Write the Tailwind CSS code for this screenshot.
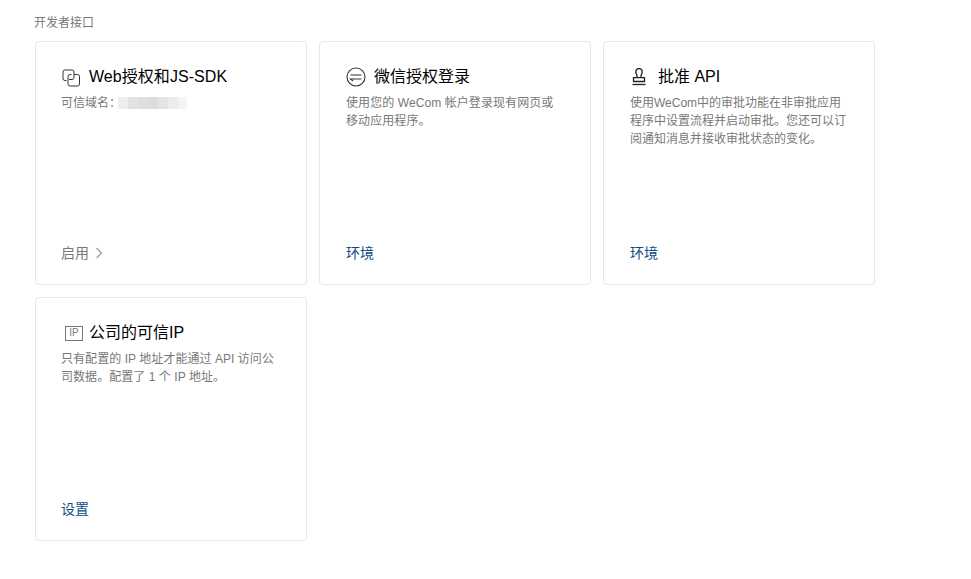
<!DOCTYPE html>
<html lang="zh-CN">
<head>
    <meta charset="UTF-8">
    <meta name="viewport" content="width=device-width, initial-scale=1.0">
    <title>开发者接口</title>
    <script src="https://cdn.jsdelivr.net/npm/@tailwindcss/browser@4"></script>
</head>
<body class="bg-white font-['Liberation_Sans','Noto_Sans_CJK_SC',sans-serif]">
<div class="pl-[35px] pt-[15px]">
    <div class="-ml-[1px] h-[16px] text-[12px] leading-[16px] text-[#787878]">开发者接口</div>
    <div class="mt-[10px] grid grid-cols-[repeat(3,272px)] auto-rows-[244px] gap-3">

        <!-- Web auth -->
        <div class="flex flex-col rounded-[4px] border border-[#e4e6e9] pt-[23px] pb-[21px] pl-[25px] pr-[25px]">
            <div class="flex h-[24px] items-center gap-[9px] text-[16px] leading-[24px] text-[#000]">
                <svg class="ml-[1px] mt-[2px] h-[18px] w-[18px] shrink-0" viewBox="0 0 18 18" fill="none" stroke="#333" stroke-width="1">
                    <path d="M4.500 11.500H3a2 2 0 0 1-2-2V3a2 2 0 0 1 2-2h7a2 2 0 0 1 2 2v5.500a2 2 0 0 1-2 2H7"/>
                    <path d="M12 5.500h3.500a2 2 0 0 1 2 2V15a2 2 0 0 1-2 2H8a2 2 0 0 1-2-2V7.500a2 2 0 0 1 2-2h1.500"/>
                </svg>
                <span class="tracking-[0.05px]">Web授权和JS-SDK</span>
            </div>
            <div class="mt-[5px] flex h-[18px] items-center text-[12px] leading-[18px] text-[#787878]">
                <span>可信域名：</span>
                <!-- blurred out domain -->
                <span class="-ml-[3px] flex h-[12px] w-[69px]">
                    <i class="h-full w-[10px] bg-[#eeeeee]"></i>
                    <i class="h-full w-[10px] bg-[#e2e2e2]"></i>
                    <i class="h-full w-[10px] bg-[#dedede]"></i>
                    <i class="h-full w-[10px] bg-[#dcdcdc]"></i>
                    <i class="h-full w-[10px] bg-[#e4e4e4]"></i>
                    <i class="h-full w-[10px] bg-[#ececec]"></i>
                    <i class="h-full w-[9px] bg-[#f4f4f4]"></i>
                </span>
            </div>
            <div class="mt-auto flex h-[20px] items-center gap-[6px] text-[14px] leading-[20px] text-[#787878]">
                <span>启用</span>
                <svg class="h-[12px] w-[8px]" viewBox="0 0 8 12" fill="none" stroke="#a8a8a8" stroke-width="1.5"><path d="M1.500 1l5 5-5 5"/></svg>
            </div>
        </div>

        <!-- WeCom login -->
        <div class="flex flex-col rounded-[4px] border border-[#e4e6e9] pt-[23px] pb-[21px] pl-[26px] pr-[25px]">
            <div class="flex h-[24px] items-center gap-[8px] text-[16px] leading-[24px] text-[#000]">
                <svg class="h-[20px] w-[20px] shrink-0" viewBox="0 0 20 20" fill="none" stroke="#333" stroke-width="1.100">
                    <circle cx="10" cy="10" r="9"/>
                    <path d="M4.500 8h11M15.500 12h-11l2.500 2"/>
                </svg>
                <span>微信授权登录</span>
            </div>
            <p class="mt-[5px] max-w-[212px] text-[12px] leading-[18px] tracking-[0.08px] text-[#787878]">使用您的 WeCom 帐户登录现有网页或移动应用程序。</p>
            <div class="mt-auto h-[20px] text-[14px] leading-[20px] text-[#0f4a85]">环境</div>
        </div>

        <!-- Approval API -->
        <div class="flex flex-col rounded-[4px] border border-[#e4e6e9] pt-[23px] pb-[21px] pl-[26px] pr-[25px]">
            <div class="flex h-[24px] items-center gap-[12px] text-[16px] leading-[24px] text-[#000]">
                <svg class="ml-[2px] h-[18px] w-[14px] shrink-0" viewBox="0 0 14 18" fill="none" stroke="#222" stroke-width="1.300">
                    <path d="M5 9.500V8C5 6.500 3.800 5.500 3.800 3.800a3.200 3.200 0 0 1 6.400 0C10.200 5.500 9 6.500 9 8v1.500"/>
                    <path d="M1.500 9.700h11v3.800h-11z"/>
                    <path d="M0.500 16.500h13"/>
                </svg>
                <span>批准 API</span>
            </div>
            <p class="mt-[5px] text-[12px] leading-[18px] text-[#787878]">使用WeCom中的审批功能在非审批应用程序中设置流程并启动审批。您还可以订阅通知消息并接收审批状态的变化。</p>
            <div class="mt-auto h-[20px] text-[14px] leading-[20px] text-[#0f4a85]">环境</div>
        </div>

        <!-- Trusted IP -->
        <div class="flex flex-col rounded-[4px] border border-[#e4e6e9] pt-[23px] pb-[21px] pl-[25px] pr-[25px]">
            <div class="flex h-[24px] items-center gap-[6px] text-[16px] leading-[24px] text-[#000]">
                <span class="ml-[4px] flex h-[15px] w-[18px] shrink-0 items-center justify-center border border-[#777] text-[10px] leading-none text-[#777]">IP</span>
                <span>公司的可信IP</span>
            </div>
            <p class="mt-[5px] text-[12px] leading-[18px] tracking-[0.05px] text-[#787878]">只有配置的 IP 地址才能通过 API 访问公司数据。配置了 1 个 IP 地址。</p>
            <div class="mt-auto h-[20px] text-[14px] leading-[20px] text-[#0f4a85]">设置</div>
        </div>

    </div>
</div>
</body>
</html>
